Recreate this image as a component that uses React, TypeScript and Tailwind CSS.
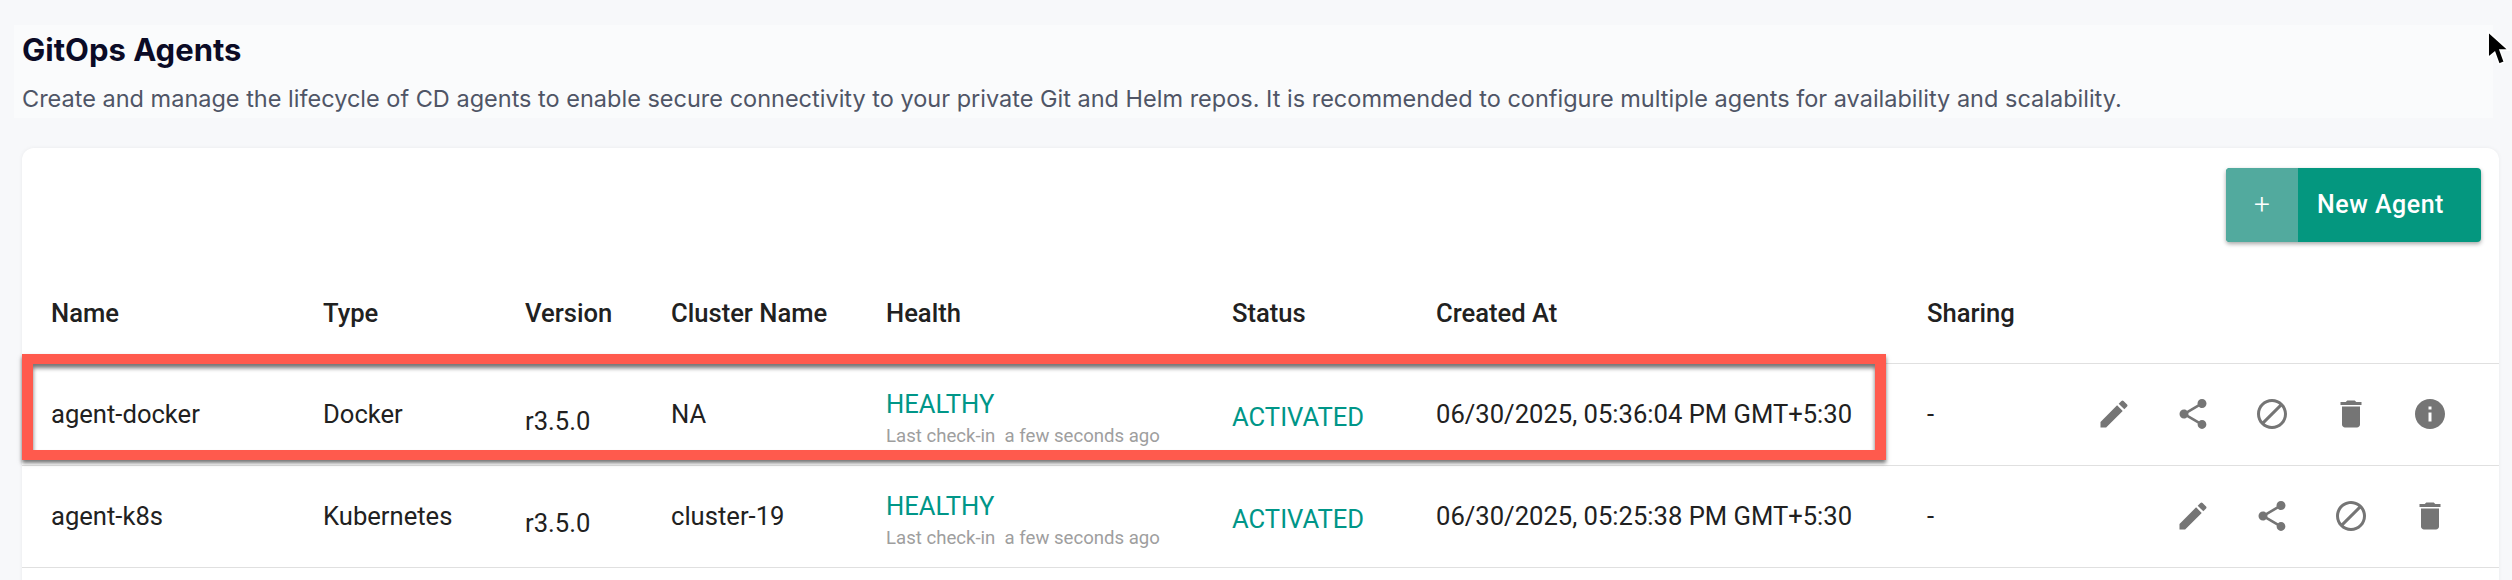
const EDIT = "M3 17.25V21h3.75L17.81 9.94l-3.75-3.75L3 17.25zM20.71 7.04c.39-.39.39-1.02 0-1.41l-2.34-2.34a.9959.9959 0 0 0-1.41 0l-1.83 1.83 3.75 3.75 1.83-1.83z";
const SHARE = "M18 16.08c-.76 0-1.44.3-1.96.77L8.91 12.7c.05-.23.09-.46.09-.7s-.04-.47-.09-.7l7.05-4.11c.54.5 1.25.81 2.04.81 1.66 0 3-1.34 3-3s-1.34-3-3-3-3 1.34-3 3c0 .24.04.47.09.7L8.04 9.81C7.5 9.31 6.79 9 6 9c-1.66 0-3 1.34-3 3s1.34 3 3 3c.79 0 1.5-.31 2.04-.81l7.12 4.16c-.05.21-.08.43-.08.65 0 1.61 1.31 2.92 2.92 2.92s2.92-1.31 2.92-2.92-1.31-2.92-2.92-2.92z";
const BLOCK = "M12 2C6.48 2 2 6.48 2 12s4.48 10 10 10 10-4.48 10-10S17.52 2 12 2zM4 12c0-4.42 3.58-8 8-8 1.85 0 3.55.63 4.9 1.69L5.69 16.9C4.63 15.55 4 13.85 4 12zm8 8c-1.85 0-3.55-.63-4.9-1.69L18.31 7.1C19.37 8.45 20 10.15 20 12c0 4.42-3.58 8-8 8z";
const DELETE = "M6 19c0 1.1.9 2 2 2h8c1.1 0 2-.9 2-2V7H6v12zM19 4h-3.5l-1-1h-5l-1 1H5v2h14V4z";
const INFO = "M12 2C6.48 2 2 6.48 2 12s4.48 10 10 10 10-4.48 10-10S17.52 2 12 2zm1 15h-2v-6h2v6zm0-8h-2V7h2v2z";

const columns = "grid grid-cols-[272px_202px_146px_215px_346px_204px_491px_1fr] pl-[29px]";

const agents = [
  { name: "agent-docker", type: "Docker", version: "r3.5.0", cluster: "NA", created: "06/30/2025, 05:36:04 PM GMT+5:30", icons: [EDIT, SHARE, BLOCK, DELETE, INFO] },
  { name: "agent-k8s", type: "Kubernetes", version: "r3.5.0", cluster: "cluster-19", created: "06/30/2025, 05:25:38 PM GMT+5:30", icons: [EDIT, SHARE, BLOCK, DELETE] },
];

const headers = ["Name", "Type", "Version", "Cluster Name", "Health", "Status", "Created At", "Sharing"];

const Icon = ({ d }: { d: string }) => (
  <svg viewBox="0 0 24 24" className="w-9 h-9 fill-[#757575]">
    <path d={d} />
  </svg>
);

export default function App() {
  return (
    <div className="relative h-[580px] overflow-hidden bg-[#f7f8fa] font-['Roboto',sans-serif] pt-[25px]">
      {/* Page heading */}
      <div className="ml-[14px] mr-[19px] h-[93px] bg-[#fafbfc] pl-2 pt-[6px]">
        <h1 className="font-['Inter',sans-serif] text-[31px] leading-[38px] font-bold text-[#0b0b26]">GitOps Agents</h1>
        <p className="mt-[15px] font-['Inter',sans-serif] text-[23.5px] leading-[30px] text-[#4f5566]">
          Create and manage the lifecycle of CD agents to enable secure connectivity to your private Git and Helm repos. It is recommended to configure multiple agents for availability and scalability.
        </p>
      </div>

      {/* Card */}
      <div className="ml-[22px] mr-[13px] mt-[30px] h-[500px] rounded-t-xl bg-white shadow-[0_0_4px_rgba(0,0,0,0.06)]">
        <div className="flex justify-end pr-[18px] pt-[20px]">
          <button className="flex h-[74px] w-[255px] overflow-hidden rounded-[4px] bg-[#04977f] text-white shadow-[0_2px_4px_rgba(0,0,0,0.35)]">
            <span className="flex h-full w-[72px] items-center justify-center bg-[#52aa9e] text-[28px] font-light">+</span>
            <span className="flex h-full flex-1 items-center justify-center pr-[18px] text-[25px] font-medium tracking-[0.5px]">New Agent</span>
          </button>
        </div>

        <div className={`${columns} h-[122px] items-center border-b border-[#e0e0e0] pt-[21px] text-[25.6px] font-medium text-[#212121]`}>
          {headers.map((h) => (
            <div key={h}>{h}</div>
          ))}
        </div>

        {agents.map((a) => (
          <div key={a.name} className={`${columns} h-[102px] items-center border-b border-[#e0e0e0] text-[25.6px] text-[#212121]`}>
            <div>{a.name}</div>
            <div>{a.type}</div>
            <div className="pt-[14px]">{a.version}</div>
            <div>{a.cluster}</div>
            <div className="pt-[7px]">
              <div className="leading-[28px] text-[#009688]">HEALTHY</div>
              <div className="mt-[7px] text-[18.6px] leading-[22px] whitespace-pre text-[#9e9e9e]">Last check-in  a few seconds ago</div>
            </div>
            <div className="pt-[6px] text-[#009688]">ACTIVATED</div>
            <div>{a.created}</div>
            <div className="flex items-center">
              <span className="w-[100px]">-</span>
              <div className="flex flex-1 justify-end gap-[43px] pr-[51px]">
                {a.icons.map((d) => (
                  <Icon key={d} d={d} />
                ))}
              </div>
            </div>
          </div>
        ))}
      </div>

      {/* Red highlight over the first row */}
      <div className="absolute left-[22px] top-[354px] h-[106px] w-[1864px] border-x-[11px] border-y-[10px] border-[#ff5a4d] shadow-[0_3px_4px_rgba(0,0,0,0.55),inset_0_4px_4px_rgba(0,0,0,0.55)]" />

      {/* Mouse pointer */}
      <svg viewBox="0 0 24 34" className="absolute left-[2486px] top-[30px] h-[38px] w-[26px]">
        <path d="M2 1 L2 25 L8 20 L12 31 L17 29 L13 18 L21 18 Z" fill="#000" stroke="#fff" strokeWidth="1.5" />
      </svg>
    </div>
  );
}
